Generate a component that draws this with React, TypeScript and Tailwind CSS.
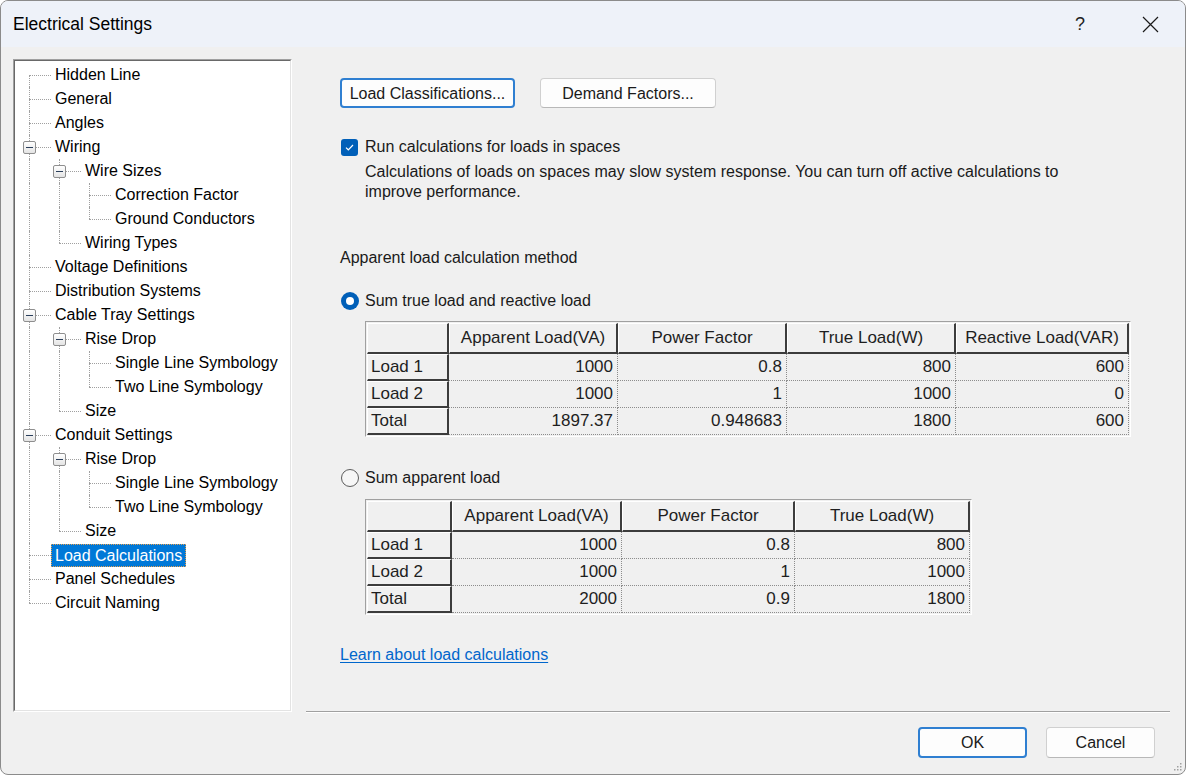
import React from 'react';

type TreeNode = {
  label: string;
  d: number;
  anc: boolean[];
  first?: boolean;
  last?: boolean;
  box?: boolean;
  sel?: boolean;
};

const tree: TreeNode[] = [
  { label: 'Hidden Line', d: 0, anc: [], first: true },
  { label: 'General', d: 0, anc: [] },
  { label: 'Angles', d: 0, anc: [] },
  { label: 'Wiring', d: 0, anc: [], box: true },
  { label: 'Wire Sizes', d: 1, anc: [true], box: true },
  { label: 'Correction Factor', d: 2, anc: [true, true] },
  { label: 'Ground Conductors', d: 2, anc: [true, true], last: true },
  { label: 'Wiring Types', d: 1, anc: [true], last: true },
  { label: 'Voltage Definitions', d: 0, anc: [] },
  { label: 'Distribution Systems', d: 0, anc: [] },
  { label: 'Cable Tray Settings', d: 0, anc: [], box: true },
  { label: 'Rise Drop', d: 1, anc: [true], box: true },
  { label: 'Single Line Symbology', d: 2, anc: [true, true] },
  { label: 'Two Line Symbology', d: 2, anc: [true, true], last: true },
  { label: 'Size', d: 1, anc: [true], last: true },
  { label: 'Conduit Settings', d: 0, anc: [], box: true },
  { label: 'Rise Drop', d: 1, anc: [true], box: true },
  { label: 'Single Line Symbology', d: 2, anc: [true, true] },
  { label: 'Two Line Symbology', d: 2, anc: [true, true], last: true },
  { label: 'Size', d: 1, anc: [true], last: true },
  { label: 'Load Calculations', d: 0, anc: [], sel: true },
  { label: 'Panel Schedules', d: 0, anc: [] },
  { label: 'Circuit Naming', d: 0, anc: [], last: true },
];

function Connector({ first, last, box }: { first?: boolean; last?: boolean; box?: boolean }) {
  const vert = first ? 'top-[12px] bottom-0' : last ? 'top-0 h-[12px]' : 'top-0 bottom-0';
  return (
    <div className="relative w-[40px] h-[24px] shrink-0">
      <div className={`absolute left-[14px] w-0 border-l border-dotted border-[#a0a0a0] ${vert}`} />
      <div className="absolute left-[14px] top-[12px] w-[22px] h-0 border-t border-dotted border-[#a0a0a0]" />
      {box && (
        <div className="absolute left-[8px] top-[6px] w-[13px] h-[13px] border border-[#8f8f8f] rounded-[2px] bg-linear-to-b from-white to-[#e4e4e4] flex items-center justify-center">
          <div className="w-[7px] h-[1px] bg-[#2b3f5c]" />
        </div>
      )}
    </div>
  );
}

function TreeRow({ node }: { node: TreeNode }) {
  return (
    <div className="flex items-center h-[24px]">
      {node.anc.map((on, i) => (
        <div key={i} className="relative w-[30px] h-[24px] shrink-0">
          {on && <div className="absolute left-[14px] top-0 bottom-0 w-0 border-l border-dotted border-[#a0a0a0]" />}
        </div>
      ))}
      <Connector first={node.first} last={node.last} box={node.box} />
      {node.sel ? (
        <span className="-ml-[4px] px-[3px] leading-[21px] bg-[#0078d7] text-white border border-dotted border-[#e8a050] whitespace-nowrap">
          {node.label}
        </span>
      ) : (
        <span className="leading-[24px] text-black whitespace-nowrap">{node.label}</span>
      )}
    </div>
  );
}

const headCell =
  'flex items-center justify-center bg-[#f0f0f0] border-t border-l border-r-2 border-b-2 border-t-white border-l-white border-r-[#3c3c3c] border-b-[#3c3c3c]';
const rowHeadCell =
  'h-[27px] flex items-center pl-[3px] bg-[#f0f0f0] border-t border-l border-r-2 border-b-2 border-t-white border-l-white border-r-[#3c3c3c] border-b-[#3c3c3c]';
const dataCell =
  'h-[27px] flex items-center justify-end pr-[4px] border-r border-b border-dotted border-[#8c8c8c]';

function LoadTable({ grid, headers, rows }: { grid: string; headers: string[]; rows: string[][] }) {
  return (
    <div className="inline-block border-t border-l border-[#a0a0a0] border-r border-b border-r-white border-b-white p-[1px] text-[17px] text-[#1e1e1e]">
      <div className={`grid ${grid}`}>
        <div className={`${headCell} h-[31px]`} />
        {headers.map((h) => (
          <div key={h} className={`${headCell} h-[31px]`}>
            {h}
          </div>
        ))}
        {rows.map((r) =>
          r.map((c, i) =>
            i === 0 ? (
              <div key={r[0] + i} className={rowHeadCell}>
                {c}
              </div>
            ) : (
              <div key={r[0] + i} className={dataCell}>
                {c}
              </div>
            )
          )
        )}
      </div>
    </div>
  );
}

export default function App() {
  return (
    <div className="relative w-[1186px] h-[775px] bg-[#f0f0f0] rounded-[8px] border border-[#8b8b8b] overflow-hidden flex flex-col font-['Liberation_Sans',Arial,sans-serif] text-[16px] text-[#1a1a1a]">
      {/* title bar */}
      <div className="h-[46px] bg-[#eef2f9] flex items-center pl-[12px] pr-[12px] shrink-0">
        <div className="flex-1 text-[17.5px] text-black">Electrical Settings</div>
        <div className="w-[46px] text-center text-[18px] text-[#222]">?</div>
        <div className="w-[24px]" />
        <div className="w-[46px] flex items-center justify-center">
          <svg width="17" height="17" viewBox="0 0 17 17">
            <path d="M1 1 L16 16 M16 1 L1 16" stroke="#1a1a1a" strokeWidth="1.2" fill="none" />
          </svg>
        </div>
      </div>

      {/* main */}
      <div className="flex pt-[12px] pl-[12px]">
        <div className="w-[279px] h-[653px] border-t border-l border-[#a0a0a0] border-r border-b border-r-white border-b-white shrink-0">
          <div className="w-full h-full bg-white border-t border-l border-[#696969] border-r border-b border-r-[#e3e3e3] border-b-[#e3e3e3] pt-[2px] overflow-hidden">
            {tree.map((n, i) => (
              <TreeRow key={i} node={n} />
            ))}
          </div>
        </div>

        <div className="ml-[14px] w-[864px] h-[653px] border-b border-[#a0a0a0] shadow-[0_1px_0_#ffffff] pl-[34px] pt-[19px]">
          <div className="flex gap-[25px]">
            <button className="w-[175px] h-[30px] pt-[1px] rounded-[4px] border-2 border-[#2f7fd1] bg-[#fdfdfd] text-[#1a1a1a]">
              Load Classifications...
            </button>
            <button className="w-[176px] h-[30px] pt-[1px] rounded-[4px] border border-[#d0d0d0] border-b-[#b8b8b8] bg-[#fdfdfd] text-[#1a1a1a]">
              Demand Factors...
            </button>
          </div>

          <div className="mt-[29px] flex items-center h-[20px]">
            <div className="ml-[1px] w-[17px] h-[17px] rounded-[3px] bg-[#005fb8] flex items-center justify-center">
              <svg width="11" height="9" viewBox="0 0 11 9">
                <path d="M2 4.6 L4.3 6.8 L9 2" stroke="#ffffff" strokeWidth="1.2" fill="none" />
              </svg>
            </div>
            <span className="ml-[7px]">Run calculations for loads in spaces</span>
          </div>
          <div className="mt-[5px] pl-[25px] leading-[20px] whitespace-nowrap">
            Calculations of loads on spaces may slow system response. You can turn off active calculations to
            <br />
            improve performance.
          </div>

          <div className="mt-[46px] leading-[20px]">Apparent load calculation method</div>

          <div className="mt-[23px] flex items-center h-[20px]">
            <div className="ml-[1px] w-[18px] h-[18px] rounded-full bg-[#005fb8] flex items-center justify-center">
              <div className="w-[8px] h-[8px] rounded-full bg-white" />
            </div>
            <span className="ml-[6px]">Sum true load and reactive load</span>
          </div>
          <div className="mt-[10px] ml-[25px]">
            <LoadTable
              grid="grid-cols-[82px_169px_169px_169px_173px]"
              headers={['Apparent Load(VA)', 'Power Factor', 'True Load(W)', 'Reactive Load(VAR)']}
              rows={[
                ['Load 1', '1000', '0.8', '800', '600'],
                ['Load 2', '1000', '1', '1000', '0'],
                ['Total', '1897.37', '0.948683', '1800', '600'],
              ]}
            />
          </div>

          <div className="mt-[31px] flex items-center h-[20px]">
            <div className="ml-[1px] w-[18px] h-[18px] rounded-full border border-[#5c5c5c] bg-[#f6f6f6]" />
            <span className="ml-[6px]">Sum apparent load</span>
          </div>
          <div className="mt-[11px] ml-[25px]">
            <LoadTable
              grid="grid-cols-[85px_170px_173px_175px]"
              headers={['Apparent Load(VA)', 'Power Factor', 'True Load(W)']}
              rows={[
                ['Load 1', '1000', '0.8', '800'],
                ['Load 2', '1000', '1', '1000'],
                ['Total', '2000', '0.9', '1800'],
              ]}
            />
          </div>

          <div className="mt-[30px] leading-[20px]">
            <span className="text-[#0066cc] underline underline-offset-2">Learn about load calculations</span>
          </div>
        </div>
      </div>

      {/* footer */}
      <div className="flex justify-end gap-[19px] pt-[15px] pr-[30px]">
        <button className="w-[109px] h-[31px] pt-[1px] rounded-[4px] border-2 border-[#2f7fd1] bg-[#fdfdfd] text-[#1a1a1a]">
          OK
        </button>
        <button className="w-[109px] h-[31px] pt-[1px] rounded-[4px] border border-[#d0d0d0] border-b-[#b8b8b8] bg-[#fdfdfd] text-[#1a1a1a]">
          Cancel
        </button>
      </div>

      {/* resize grip */}
      <svg className="absolute right-[3px] bottom-[3px]" width="8" height="8" viewBox="0 0 8 8">
        <rect x="6" y="0" width="1.5" height="1.5" fill="#a0a0a0" />
        <rect x="3" y="3" width="1.5" height="1.5" fill="#a0a0a0" />
        <rect x="6" y="3" width="1.5" height="1.5" fill="#a0a0a0" />
        <rect x="0" y="6" width="1.5" height="1.5" fill="#a0a0a0" />
        <rect x="3" y="6" width="1.5" height="1.5" fill="#a0a0a0" />
        <rect x="6" y="6" width="1.5" height="1.5" fill="#a0a0a0" />
      </svg>
    </div>
  );
}
